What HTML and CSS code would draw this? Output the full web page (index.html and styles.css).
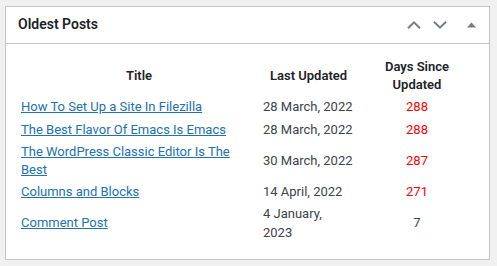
FILE: index.html
```html
<!DOCTYPE html>
<html lang="en">
<head>
  <meta charset="UTF-8" />
  <title>Oldest Posts</title>
  <link rel="stylesheet" href="styles.css">
</head>
<body>
  <div class="postbox">
    <div class="postbox-header">
      <h2>Oldest Posts</h2>
      <div class="handle-actions">
        <button class="handle-order" aria-label="Move up">
          <svg width="14" height="8" viewBox="0 0 14 8"><polyline points="1,7.2 7,1.4 13,7.2" /></svg>
        </button>
        <button class="handle-order" aria-label="Move down">
          <svg width="14" height="8" viewBox="0 0 14 8"><polyline points="1,0.8 7,6.6 13,0.8" /></svg>
        </button>
        <button class="handlediv" aria-label="Toggle panel">
          <svg width="9" height="6" viewBox="0 0 9 6"><polygon points="0,5.5 4.5,0.5 9,5.5" /></svg>
        </button>
      </div>
    </div>
    <div class="inside">
      <table class="oldest-posts">
        <colgroup>
          <col class="col-title">
          <col class="col-date">
          <col class="col-days">
        </colgroup>
        <thead>
          <tr>
            <th>Title</th>
            <th>Last Updated</th>
            <th>Days Since Updated</th>
          </tr>
        </thead>
        <tbody>
          <tr>
            <td><a href="#">How To Set Up a Site In Filezilla</a></td>
            <td>28 March, 2022</td>
            <td class="days old">288</td>
          </tr>
          <tr>
            <td><a href="#">The Best Flavor Of Emacs Is Emacs</a></td>
            <td>28 March, 2022</td>
            <td class="days old">288</td>
          </tr>
          <tr>
            <td><a href="#">The WordPress Classic Editor Is The Best</a></td>
            <td>30 March, 2022</td>
            <td class="days old">287</td>
          </tr>
          <tr>
            <td><a href="#">Columns and Blocks</a></td>
            <td>14 April, 2022</td>
            <td class="days old">271</td>
          </tr>
          <tr>
            <td><a href="#">Comment Post</a></td>
            <td>4 January, 2023</td>
            <td class="days">7</td>
          </tr>
        </tbody>
      </table>
    </div>
  </div>
</body>
</html>
```

FILE: styles.css
```css
body {
  margin: 0;
  background: #f0f0f1;
  font-family: Roboto, "Liberation Sans", sans-serif;
  font-size: 13px;
  line-height: 1.4;
  color: #3c434a;
}
.postbox {
  box-sizing: border-box;
  width: 485px;
  margin: 6px 0 0 5px;
  background: #fff;
  border: 1px solid #c3c4c7;
}
.postbox-header {
  display: flex;
  align-items: center;
  height: 36px;
  border-bottom: 1px solid #c3c4c7;
}
.postbox-header h2 {
  flex: 1;
  margin: 0;
  padding: 0 12px;
  font-size: 14px;
  font-weight: 600;
  color: #1d2327;
}
.handle-actions {
  display: flex;
}
.handle-actions button {
  display: flex;
  align-items: center;
  justify-content: center;
  height: 36px;
  padding: 0;
  border: none;
  background: none;
  cursor: pointer;
}
.handle-order {
  width: 26px;
}
.handlediv {
  width: 36px;
}
.handle-actions polyline {
  fill: none;
  stroke: #787c82;
  stroke-width: 2;
}
.handle-actions polygon {
  fill: #787c82;
}
.inside {
  margin-top: 12px;
  padding: 0 12px 15px;
}
.oldest-posts {
  width: 100%;
  table-layout: fixed;
  border-collapse: collapse;
}
.col-title {
  width: 242px;
}
.col-date {
  width: 97px;
}
.oldest-posts th,
.oldest-posts td {
  padding: 2px 3px;
  vertical-align: middle;
}
.oldest-posts th {
  font-weight: 600;
  color: #1d2327;
  text-align: center;
}
.oldest-posts td {
  text-align: left;
}
.oldest-posts a {
  color: #2271b1;
}
.oldest-posts td.days {
  text-align: center;
}
.days.old {
  color: #ff0000;
}
```
